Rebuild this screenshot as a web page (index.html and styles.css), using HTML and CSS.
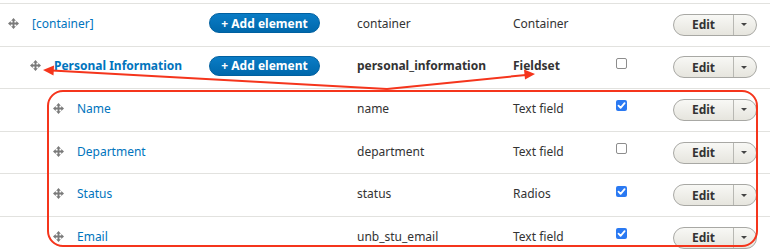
FILE: index.html
```html
<!DOCTYPE html>
<html>
<head>
<meta charset="utf-8">
<link rel="stylesheet" href="styles.css">
</head>
<body>
<div class="page">
  <div class="table">
    <div class="row">
      <div class="cell title depth-0"><span class="handle"><svg viewBox="0 0 12 12" width="11" height="11"><path d="M6 0L8.6 3H7V5H9V3.4L12 6L9 8.6V7H7V9H8.6L6 12L3.4 9H5V7H3V8.6L0 6L3 3.4V5H5V3H3.4Z" fill="#7a7a7a"/></svg></span><a class="link">[container]</a></div>
      <div class="cell"><span class="add-btn">+ Add element</span></div>
      <div class="cell key">container</div>
      <div class="cell">Container</div>
      <div class="cell"></div>
      <div class="cell ops"><span class="edit"><span class="edit-main">Edit</span><span class="edit-toggle"><i class="caret"></i></span></span></div>
    </div>
    <div class="row">
      <div class="cell title depth-1"><span class="handle"><svg viewBox="0 0 12 12" width="11" height="11"><path d="M6 0L8.6 3H7V5H9V3.4L12 6L9 8.6V7H7V9H8.6L6 12L3.4 9H5V7H3V8.6L0 6L3 3.4V5H5V3H3.4Z" fill="#7a7a7a"/></svg></span><a class="link bold">Personal Information</a></div>
      <div class="cell"><span class="add-btn">+ Add element</span></div>
      <div class="cell key bold">personal_information</div>
      <div class="cell bold">Fieldset</div>
      <div class="cell"><span class="check"></span></div>
      <div class="cell ops"><span class="edit"><span class="edit-main">Edit</span><span class="edit-toggle"><i class="caret"></i></span></span></div>
    </div>
    <div class="row">
      <div class="cell title depth-2"><span class="handle"><svg viewBox="0 0 12 12" width="11" height="11"><path d="M6 0L8.6 3H7V5H9V3.4L12 6L9 8.6V7H7V9H8.6L6 12L3.4 9H5V7H3V8.6L0 6L3 3.4V5H5V3H3.4Z" fill="#7a7a7a"/></svg></span><a class="link">Name</a></div>
      <div class="cell"></div>
      <div class="cell key">name</div>
      <div class="cell">Text field</div>
      <div class="cell"><span class="check on"><svg viewBox="0 0 11 11" width="11" height="11"><path d="M2.5 5.6L4.6 7.8L8.6 3.2" fill="none" stroke="#fff" stroke-width="1.8" stroke-linecap="round" stroke-linejoin="round"/></svg></span></div>
      <div class="cell ops"><span class="edit"><span class="edit-main">Edit</span><span class="edit-toggle"><i class="caret"></i></span></span></div>
    </div>
    <div class="row">
      <div class="cell title depth-2"><span class="handle"><svg viewBox="0 0 12 12" width="11" height="11"><path d="M6 0L8.6 3H7V5H9V3.4L12 6L9 8.6V7H7V9H8.6L6 12L3.4 9H5V7H3V8.6L0 6L3 3.4V5H5V3H3.4Z" fill="#7a7a7a"/></svg></span><a class="link">Department</a></div>
      <div class="cell"></div>
      <div class="cell key">department</div>
      <div class="cell">Text field</div>
      <div class="cell"><span class="check"></span></div>
      <div class="cell ops"><span class="edit"><span class="edit-main">Edit</span><span class="edit-toggle"><i class="caret"></i></span></span></div>
    </div>
    <div class="row">
      <div class="cell title depth-2"><span class="handle"><svg viewBox="0 0 12 12" width="11" height="11"><path d="M6 0L8.6 3H7V5H9V3.4L12 6L9 8.6V7H7V9H8.6L6 12L3.4 9H5V7H3V8.6L0 6L3 3.4V5H5V3H3.4Z" fill="#7a7a7a"/></svg></span><a class="link">Status</a></div>
      <div class="cell"></div>
      <div class="cell key">status</div>
      <div class="cell">Radios</div>
      <div class="cell"><span class="check on"><svg viewBox="0 0 11 11" width="11" height="11"><path d="M2.5 5.6L4.6 7.8L8.6 3.2" fill="none" stroke="#fff" stroke-width="1.8" stroke-linecap="round" stroke-linejoin="round"/></svg></span></div>
      <div class="cell ops"><span class="edit"><span class="edit-main">Edit</span><span class="edit-toggle"><i class="caret"></i></span></span></div>
    </div>
    <div class="row">
      <div class="cell title depth-2"><span class="handle"><svg viewBox="0 0 12 12" width="11" height="11"><path d="M6 0L8.6 3H7V5H9V3.4L12 6L9 8.6V7H7V9H8.6L6 12L3.4 9H5V7H3V8.6L0 6L3 3.4V5H5V3H3.4Z" fill="#7a7a7a"/></svg></span><a class="link">Email</a></div>
      <div class="cell"></div>
      <div class="cell key">unb_stu_email</div>
      <div class="cell">Text field</div>
      <div class="cell"><span class="check on"><svg viewBox="0 0 11 11" width="11" height="11"><path d="M2.5 5.6L4.6 7.8L8.6 3.2" fill="none" stroke="#fff" stroke-width="1.8" stroke-linecap="round" stroke-linejoin="round"/></svg></span></div>
      <div class="cell ops"><span class="edit"><span class="edit-main">Edit</span><span class="edit-toggle"><i class="caret"></i></span></span></div>
    </div>
  </div>
  <svg class="annot" width="770" height="250" viewBox="0 0 770 250">
    <rect x="48" y="91" width="709" height="155" rx="15" ry="15" fill="none" stroke="#f5351c" stroke-width="2"/>
    <line x1="387" y1="89" x2="52" y2="70.5" stroke="#f5351c" stroke-width="2"/>
    <polygon points="43,70 54,65.5 53.5,75.5" fill="#f5351c"/>
    <line x1="387" y1="89" x2="526" y2="75" stroke="#f5351c" stroke-width="2"/>
    <polygon points="535,74 524,69.5 525,79.5" fill="#f5351c"/>
  </svg>
</div>
</body>
</html>
```

FILE: styles.css
```css
html, body {
  margin: 0;
  padding: 0;
  background: #fff;
}
.page {
  position: relative;
  width: 770px;
  height: 250px;
  overflow: hidden;
  padding-top: 3px;
  box-sizing: border-box;
  font-family: "Noto Sans", "DejaVu Sans", sans-serif;
  font-size: 12px;
  color: #333;
}
.table {
  border-top: 1px solid #e2e2df;
}
.row {
  display: grid;
  grid-template-columns: 209px 148px 156px 103px 57px 1fr;
  height: 42.6px;
  box-sizing: border-box;
  border-bottom: 1px solid #e2e2df;
  align-items: center;
}
.cell {
  display: flex;
  align-items: center;
  white-space: nowrap;
  padding-bottom: 3px;
}
.cell.ops {
  padding-bottom: 0;
}
.title {
  padding-left: 8px;
}
.depth-1 { padding-left: 30px; }
.depth-2 { padding-left: 53px; }
.handle {
  display: inline-flex;
  width: 11px;
  height: 11px;
  margin-right: 13px;
}
.link {
  color: #0074bd;
  text-decoration: none;
}
.bold {
  font-weight: 700;
}
.key {
  color: #333;
}
.add-btn {
  display: inline-flex;
  align-items: center;
  justify-content: center;
  width: 111px;
  height: 20px;
  box-sizing: border-box;
  border-radius: 10px;
  background: linear-gradient(#0a7cc5, #0068ac);
  border: 1px solid #0060a0;
  color: #fff;
  font-weight: 700;
  font-size: 12px;
}
.check {
  display: inline-flex;
  align-items: center;
  justify-content: center;
  width: 11px;
  height: 11px;
  box-sizing: border-box;
  border: 1px solid #8d8d8d;
  border-radius: 2px;
  background: #fff;
  margin-top: -5px;
}
.check.on {
  border: none;
  background: #2a79f2;
}
.edit {
  display: inline-flex;
  height: 22px;
  width: 84px;
  box-sizing: border-box;
  border: 1px solid #a8a8a4;
  border-radius: 11px;
  background: linear-gradient(#f8f8f5, #e6e5de);
  overflow: hidden;
}
.edit-main {
  width: 59px;
  display: flex;
  align-items: center;
  justify-content: center;
  font-weight: 700;
  font-size: 12px;
  color: #333;
  border-right: 1px solid #b8b8b3;
}
.edit-toggle {
  flex: 1;
  display: flex;
  align-items: center;
  justify-content: center;
}
.caret {
  width: 0;
  height: 0;
  border-left: 3px solid transparent;
  border-right: 3px solid transparent;
  border-top: 3px solid #444;
  margin-right: 2px;
}
.annot {
  position: absolute;
  left: 0;
  top: 0;
  pointer-events: none;
}
```
